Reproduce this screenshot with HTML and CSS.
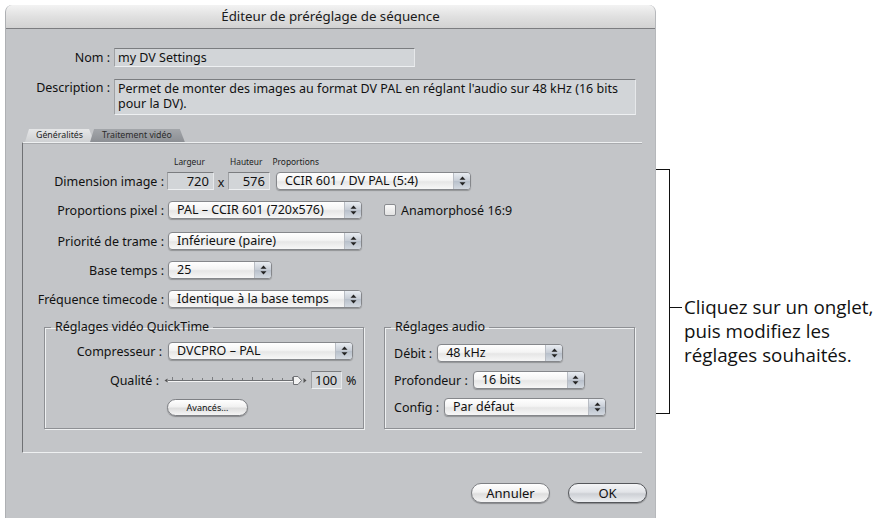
FILE: index.html
```html
<!DOCTYPE html>
<html lang="fr">
<head>
<meta charset="utf-8">
<title>Éditeur de préréglage de séquence</title>
<link rel="stylesheet" href="styles.css">
</head>
<body>
<div class="page">
  <div class="window">
    <div class="titlebar">Éditeur de préréglage de séquence</div>
    <div class="content">
      <div class="row row-nom">
        <label class="lbl lbl-top">Nom :</label>
        <div class="field field-nom">my DV Settings</div>
      </div>
      <div class="row row-desc">
        <label class="lbl lbl-top lbl-desc">Description :</label>
        <div class="field field-desc">Permet de monter des images au format DV PAL en réglant l'audio sur 48 kHz (16 bits pour la DV).</div>
      </div>

      <div class="tabs">
        <div class="tab tab-on">Généralités</div>
        <div class="tab tab-off">Traitement vidéo</div>
      </div>
      <div class="pane">
        <div class="heads">
          <span class="head h-larg">Largeur</span>
          <span class="head h-haut">Hauteur</span>
          <span class="head h-prop">Proportions</span>
        </div>
        <div class="prow">
          <label class="lbl lbl-pane">Dimension image :</label>
          <div class="field num num-w">720</div>
          <span class="times">x</span>
          <div class="field num num-h">576</div>
          <div class="popup p-ccir"><span class="pv">CCIR 601 / DV PAL (5:4)</span><span class="arr"><svg width="7" height="10" viewBox="0 0 7 10"><path d="M3.5 0.5 L6.5 3.8 L0.5 3.8Z M3.5 9.5 L6.5 6.2 L0.5 6.2Z" fill="#222"/></svg></span></div>
        </div>
        <div class="prow">
          <label class="lbl lbl-pane">Proportions pixel :</label>
          <div class="popup p-std"><span class="pv">PAL – CCIR 601 (720x576)</span><span class="arr"><svg width="7" height="10" viewBox="0 0 7 10"><path d="M3.5 0.5 L6.5 3.8 L0.5 3.8Z M3.5 9.5 L6.5 6.2 L0.5 6.2Z" fill="#222"/></svg></span></div>
          <span class="check"></span>
          <span class="check-lbl">Anamorphosé 16:9</span>
        </div>
        <div class="prow prow-gap">
          <label class="lbl lbl-pane">Priorité de trame :</label>
          <div class="popup p-std"><span class="pv">Inférieure (paire)</span><span class="arr"><svg width="7" height="10" viewBox="0 0 7 10"><path d="M3.5 0.5 L6.5 3.8 L0.5 3.8Z M3.5 9.5 L6.5 6.2 L0.5 6.2Z" fill="#222"/></svg></span></div>
        </div>
        <div class="prow">
          <label class="lbl lbl-pane">Base temps :</label>
          <div class="popup p-base"><span class="pv">25</span><span class="arr"><svg width="7" height="10" viewBox="0 0 7 10"><path d="M3.5 0.5 L6.5 3.8 L0.5 3.8Z M3.5 9.5 L6.5 6.2 L0.5 6.2Z" fill="#222"/></svg></span></div>
        </div>
        <div class="prow">
          <label class="lbl lbl-pane">Fréquence timecode :</label>
          <div class="popup p-std"><span class="pv">Identique à la base temps</span><span class="arr"><svg width="7" height="10" viewBox="0 0 7 10"><path d="M3.5 0.5 L6.5 3.8 L0.5 3.8Z M3.5 9.5 L6.5 6.2 L0.5 6.2Z" fill="#222"/></svg></span></div>
        </div>

        <div class="groups">
          <fieldset class="group g-video">
            <legend>Réglages vidéo QuickTime</legend>
            <div class="grow g-first">
              <label class="lbl lbl-vid">Compresseur :</label>
              <div class="popup p-comp"><span class="pv">DVCPRO – PAL</span><span class="arr"><svg width="7" height="10" viewBox="0 0 7 10"><path d="M3.5 0.5 L6.5 3.8 L0.5 3.8Z M3.5 9.5 L6.5 6.2 L0.5 6.2Z" fill="#222"/></svg></span></div>
            </div>
            <div class="grow g-qual">
              <label class="lbl lbl-qual">Qualité :</label>
              <svg class="slider" width="143" height="14" viewBox="0 0 143 14">
                <path d="M0.5 7.5 L3.5 5.5 L3.5 9.5Z" fill="#555"/>
                <line x1="4" y1="7.5" x2="131" y2="7.5" stroke="#6d6f72" stroke-width="1"/>
                <line x1="4" y1="8.5" x2="131" y2="8.5" stroke="#f4f4f4" stroke-width="1"/>
                <path d="M8.5 7 V4 M18.5 7 V5 M28.5 7 V5 M38.5 7 V5 M48.5 7 V4 M58.5 7 V5 M68.5 7 V5 M78.5 7 V5 M88.5 7 V4 M98.5 7 V5 M108.5 7 V5 M118.5 7 V5 M128.5 7 V4" stroke="#7c7e81" stroke-width="1"/>
                <path d="M129.5 3.5 H134 L137.5 7.5 L134 11.5 H129.5Z" fill="#f2f2f2" stroke="#6f7175"/>
                <path d="M139.5 5 L142.5 7.5 L139.5 10Z" fill="#555"/>
              </svg>
              <div class="field num num-q">100</div>
              <span class="pct">%</span>
            </div>
            <div class="grow g-btn">
              <button class="btn btn-small">Avancés…</button>
            </div>
          </fieldset>
          <fieldset class="group g-audio">
            <legend>Réglages audio</legend>
            <div class="grow a-first">
              <label class="lbl lbl-aud">Débit :</label>
              <div class="popup p-debit"><span class="pv">48 kHz</span><span class="arr"><svg width="7" height="10" viewBox="0 0 7 10"><path d="M3.5 0.5 L6.5 3.8 L0.5 3.8Z M3.5 9.5 L6.5 6.2 L0.5 6.2Z" fill="#222"/></svg></span></div>
            </div>
            <div class="grow a-row">
              <label class="lbl lbl-aud">Profondeur :</label>
              <div class="popup p-prof"><span class="pv">16 bits</span><span class="arr"><svg width="7" height="10" viewBox="0 0 7 10"><path d="M3.5 0.5 L6.5 3.8 L0.5 3.8Z M3.5 9.5 L6.5 6.2 L0.5 6.2Z" fill="#222"/></svg></span></div>
            </div>
            <div class="grow a-row">
              <label class="lbl lbl-aud">Config :</label>
              <div class="popup p-conf"><span class="pv">Par défaut</span><span class="arr"><svg width="7" height="10" viewBox="0 0 7 10"><path d="M3.5 0.5 L6.5 3.8 L0.5 3.8Z M3.5 9.5 L6.5 6.2 L0.5 6.2Z" fill="#222"/></svg></span></div>
            </div>
          </fieldset>
        </div>
      </div>

      <div class="actions">
        <button class="btn btn-big">Annuler</button>
        <button class="btn btn-big btn-ok">OK</button>
      </div>
    </div>
  </div>

  <div class="callout">
    <div class="bracket"></div>
    <div class="note">
      <span class="tick"></span>
      <p class="note-text">Cliquez sur un onglet,<br>puis modifiez les<br>réglages souhaités.</p>
    </div>
  </div>
</div>
</body>
</html>
```
FILE: styles.css
```css
* { box-sizing: border-box; }
html, body { margin: 0; padding: 0; background: #fff; }
body {
  font-family: "Lucida Grande", "Noto Sans", "DejaVu Sans", sans-serif;
  font-size: 12.5px;
  color: #111;
  width: 879px;
  height: 518px;
  overflow: hidden;
}
.page {
  display: flex;
  align-items: flex-start;
  padding: 5px 0 0 5px;
}

/* window */
.window {
  width: 651px;
  height: 513px;
  background: #c3c5c8;
  border-radius: 7px 7px 0 0;
  border-left: 1px solid #aeb0b3;
  border-right: 1px solid #b6b8bb;
  display: flex;
  flex-direction: column;
  overflow: hidden;
}
.titlebar {
  height: 24px;
  flex: none;
  background: linear-gradient(#f3f3f3, #e0e0e0 50%, #d2d2d2);
  border-bottom: 1px solid #7c7d80;
  text-align: center;
  font-size: 13.3px;
  line-height: 22px;
  color: #1a1a1a;
}
.content {
  display: flex;
  flex-direction: column;
}

.row { display: flex; align-items: flex-start; }
.row-nom { margin-top: 19px; }
.row-desc { margin-top: 12px; }
.lbl { text-align: right; white-space: nowrap; flex: none; }
.lbl-top { width: 104px; margin-right: 4px; line-height: 19px; }
.lbl-desc { line-height: 18px; }

.field {
  background: #d2d5d8;
  border-top: 1px solid #7b7d80;
  border-left: 1px solid #9fa1a4;
  border-right: 1px solid #e6e8ea;
  border-bottom: 1px solid #eef0f2;
  line-height: 16px;
  padding: 0 3px;
  white-space: nowrap;
}
.field-nom { width: 301px; height: 19px; line-height: 17px; }
.field-desc { width: 522px; height: 36px; white-space: normal; padding-top: 1px; line-height: 15px; }

/* tabs */
.tabs {
  display: flex;
  margin: 14px 0 0 19px;
  height: 13px;
}
.tab {
  font-size: 8.8px;
  line-height: 13px;
  clip-path: polygon(4px 0, calc(100% - 5px) 0, 100% 100%, 0 100%);
  white-space: nowrap;
}
.tab-on { background: linear-gradient(#e6e7e8, #cfd1d3); color: #222; padding: 0 11px 0 11px; }
.tab-off { background: linear-gradient(#a3a6aa, #8c8f94); color: #2b2b2b; margin-left: -4px; padding: 0 13px 0 12px; }

.pane {
  margin-left: 16px;
  width: 620px;
  border-top: 1px solid #eef0f1;
  border-bottom: 1px solid #eef0f1;
  border-left: 1px solid #6f7174;
  box-shadow: inset 0 1px 0 #a9abae;
  padding-bottom: 23px;
  display: flex;
  flex-direction: column;
}
.heads {
  height: 12px;
  margin-top: 13px;
  display: flex;
  font-size: 8.4px;
  line-height: 12px;
  color: #222;
}
.h-larg { margin-left: 151px; }
.h-haut { margin-left: 25px; }
.h-prop { margin-left: 10px; }

.prow {
  display: flex;
  align-items: center;
  height: 18px;
  margin-top: 11px;
}
.heads + .prow { margin-top: 4px; }
.prow-gap { margin-top: 13px; }
.lbl-pane { width: 141px; margin-right: 4px; }

.num { height: 18px; text-align: right; padding-right: 4px; line-height: 16px; font-size: 13px; }
.num-w { width: 47px; margin-left: -1px; }
.num-h { width: 42px; }
.times { width: 14px; text-align: center; font-size: 12.5px; padding-top: 3px; }
.num-h + .popup { margin-left: 6px; }

/* popup buttons */
.popup {
  display: flex;
  height: 18px;
  border: 1px solid #85878b;
  border-radius: 4px;
  background: linear-gradient(#ffffff, #f4f4f4 45%, #e6e6e6 55%, #f7f7f7);
  box-shadow: 0 1px 1px rgba(0, 0, 0, 0.25);
  flex: none;
}
.pv {
  flex: 1;
  padding-left: 8px;
  line-height: 16px;
  white-space: nowrap;
  overflow: hidden;
}
.arr {
  width: 17px;
  flex: none;
  border-left: 1px solid #b9bdc4;
  border-radius: 0 3px 3px 0;
  background: linear-gradient(#e9edf2, #c6ccd5 50%, #b8c0cb 51%, #d3d9e0);
  display: flex;
  align-items: center;
  justify-content: center;
}
.p-ccir { width: 195px; }
.p-std { width: 194px; }
.p-base { width: 104px; }
.p-comp { width: 185px; }
.p-debit { width: 126px; }
.p-prof { width: 112px; }
.p-conf { width: 162px; }

.check {
  width: 12px;
  height: 12px;
  margin-left: 22px;
  background: linear-gradient(#fafafa, #e2e2e2);
  border: 1px solid #8a8c90;
  border-radius: 2px;
}
.check-lbl { margin-left: 5px; }

/* group boxes */
.groups {
  display: flex;
  align-items: stretch;
  margin-top: 12px;
  margin-left: 21px;
}
.group {
  margin: 0;
  padding: 0 0 12px 0;
  border: 1px solid #8e9094;
  box-shadow: 1px 1px 0 #eef0f1, inset 1px 1px 0 #eef0f1;
  min-width: 0;
  display: flex;
  flex-direction: column;
}
.group legend {
  padding: 0 4px;
  margin-left: 6px;
  line-height: 14px;
}
.g-video { width: 320px; }
.g-audio { width: 251px; margin-left: 20px; padding-bottom: 11px; }

.grow { display: flex; align-items: center; height: 18px; }
.g-first { margin-top: 8px; }
.lbl-vid { width: 117px; margin-right: 6px; }
.g-qual { margin-top: 11px; }
.lbl-qual { width: 114px; margin-right: 5px; }
.slider { flex: none; }
.num-q { width: 31px; margin-left: 4px; }
.pct { margin-left: 4px; }
.g-btn { margin-top: 10px; height: 17px; }

.a-first { margin-top: 10px; }
.a-row { margin-top: 9px; }
.lbl-aud { text-align: left; margin-left: 9px; margin-right: 5px; }

/* buttons */
.btn {
  font-family: inherit;
  color: #111;
  border: 1px solid #7e8084;
  background: linear-gradient(#ffffff, #f1f1f1 45%, #dedede 55%, #f5f5f5);
  box-shadow: 0 1px 1px rgba(0, 0, 0, 0.3);
  padding: 0;
  cursor: default;
}
.btn-small {
  margin-left: 122px;
  width: 81px;
  height: 17px;
  border-radius: 9px;
  font-size: 9px;
}
.actions {
  display: flex;
  justify-content: flex-end;
  gap: 18px;
  margin-top: 30px;
  padding-right: 8px;
}
.btn-big {
  width: 79px;
  height: 20px;
  border-radius: 10px;
  font-size: 13px;
}
.btn-ok {
  border-color: #55575b;
  background: linear-gradient(#f4f5f7, #e2e4e8 45%, #cdd0d5 55%, #eceef1);
}

/* annotation */
.callout {
  display: flex;
  align-items: flex-start;
  margin-top: 164px;
}
.bracket {
  width: 14px;
  height: 245px;
  border: 1px solid #111;
  border-left: none;
}
.note {
  display: flex;
  align-items: flex-start;
  margin-top: 138px;
}
.tick {
  width: 12px;
  height: 1px;
  background: #111;
}
.note-text {
  margin: -12px 0 0 2px;
  font-family: "Open Sans", "Noto Sans", sans-serif;
  font-size: 18.8px;
  line-height: 24px;
  color: #111;
  white-space: nowrap;
}
```
